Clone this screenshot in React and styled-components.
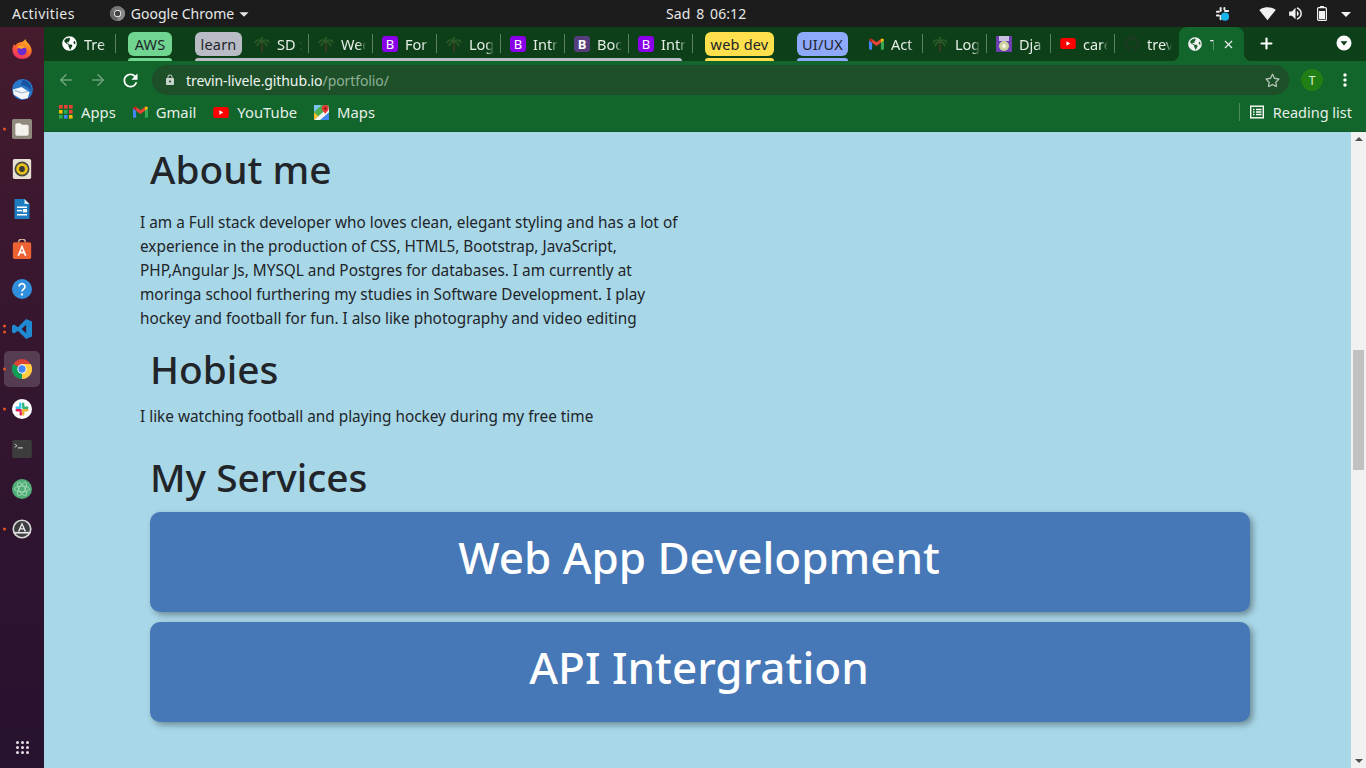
import React from 'react'
import styled, { createGlobalStyle } from 'styled-components'
import { FaGlobeAmericas, FaGithub, FaRegStar } from 'react-icons/fa'
import { FiArrowLeft, FiArrowRight, FiX, FiPlus } from 'react-icons/fi'
import { MdRefresh, MdLock, MdMoreVert, MdSignalWifi4Bar, MdVolumeUp, MdArrowDropDown } from 'react-icons/md'

const UI_FONT = `"Noto Sans", "Open Sans", sans-serif`

const Global = createGlobalStyle`
  html, body { margin: 0; padding: 0; height: 100%; overflow: hidden; }
  body { font-family: ${UI_FONT}; background: #1c1c1c; }
  * { box-sizing: border-box; }
`

const Screen = styled.div`
  width: 1366px;
  height: 768px;
  display: flex;
  flex-direction: column;
  overflow: hidden;
`

/* gnome top bar */
const TopBar = styled.div`
  height: 27px;
  flex: none;
  background: #1c1c1c;
  color: #e8e8e8;
  font-size: 14px;
  display: grid;
  grid-template-columns: 654px auto 1fr;
  align-items: center;
  padding: 0 8px 0 12px;
`
const BarLeft = styled.div`
  display: flex;
  align-items: center;
`
const Activities = styled.span`
  letter-spacing: 0.45px;
`
const AppMenu = styled.div`
  display: flex;
  align-items: center;
  margin-left: 35px;
  gap: 6px;
`
const MenuCaret = styled(MdArrowDropDown)`
  margin-left: -7px;
`
const BarRight = styled.div`
  display: flex;
  align-items: center;
  justify-content: flex-end;
  color: #f2f2f2;
`
const Tray = styled.span`
  display: flex;
  margin-left: ${p => p.$ml}px;
`
const Clock = styled.div`
  letter-spacing: 0.1px;
  word-spacing: 2px;
`

const Body = styled.div`
  flex: 1;
  display: flex;
  min-height: 0;
`

const Dock = styled.div`
  width: 44px;
  flex: none;
  background: linear-gradient(180deg, #451b2d 0%, #36162f 40%, #27122f 100%);
  display: flex;
  flex-direction: column;
  align-items: center;
  padding-top: 2px;
`
const DockItem = styled.div`
  width: 36px;
  height: 36px;
  margin: 2px 0;
  border-radius: 5px;
  background: ${p => (p.$active ? 'rgba(255,255,255,0.17)' : 'transparent')};
  display: flex;
  align-items: center;
  justify-content: center;
  position: relative;
`
const Pips = styled.div`
  position: absolute;
  left: -1px;
  top: 50%;
  transform: translateY(-50%);
  display: flex;
  flex-direction: column;
  gap: 3px;
`
const Pip = styled.span`
  width: 3px;
  height: 3px;
  border-radius: 50%;
  background: #e9541f;
`
const AppGrid = styled.div`
  margin-top: auto;
  margin-bottom: 14px;
  display: grid;
  grid-template-columns: repeat(3, 3px);
  gap: 2px;
`
const GridDot = styled.span`
  width: 3px;
  height: 3px;
  background: #e6e0e6;
  border-radius: 50%;
`

const Browser = styled.div`
  flex: 1;
  min-width: 0;
  display: flex;
  flex-direction: column;
`

const TabStrip = styled.div`
  height: 34px;
  flex: none;
  background: #0d4018;
  display: flex;
  align-items: stretch;
  padding-left: 8px;
  position: relative;
`
const Tab = styled.div`
  width: 64px;
  flex: none;
  display: flex;
  align-items: center;
  padding: 0 7px 1px 9px;
  gap: 7px;
  color: #e6eee8;
  font-size: 14.5px;
  white-space: nowrap;
  position: relative;
  &::after {
    content: '';
    display: ${p => (p.$noSep ? 'none' : 'block')};
    position: absolute;
    right: 0;
    top: 7px;
    height: 19px;
    width: 1px;
    background: #5d7f64;
  }
`
const TabLabel = styled.span`
  flex: 1;
  min-width: 0;
  overflow: hidden;
  -webkit-mask-image: linear-gradient(90deg, #000 70%, transparent 100%);
  mask-image: linear-gradient(90deg, #000 70%, transparent 100%);
`
const ActiveTab = styled.div`
  width: 65px;
  flex: none;
  background: #12652b;
  border-radius: 8px 8px 0 0;
  color: #f2f2f2;
  display: flex;
  align-items: center;
  padding: 0 9px;
  gap: 8px;
  font-size: 14px;
  position: relative;
  &::before, &::after {
    content: '';
    position: absolute;
    bottom: 0;
    width: 8px;
    height: 8px;
  }
  &::before {
    left: -8px;
    background: radial-gradient(circle at 0 0, transparent 8px, #12652b 8.5px);
  }
  &::after {
    right: -8px;
    background: radial-gradient(circle at 100% 0, transparent 8px, #12652b 8.5px);
  }
`
const GroupSlot = styled.div`
  width: ${p => p.$w}px;
  flex: none;
  padding-left: ${p => p.$left}px;
  padding-top: 5px;
  position: relative;
`
const Chip = styled.div`
  width: ${p => p.$w}px;
  height: 24px;
  border-radius: 6px;
  background: ${p => p.$bg};
  color: #20242a;
  font-size: 14.5px;
  letter-spacing: 0.2px;
  display: flex;
  align-items: center;
  justify-content: center;
  white-space: nowrap;
`
const GroupLine = styled.div`
  position: absolute;
  left: ${p => p.$left}px;
  width: ${p => p.$w}px;
  bottom: 0;
  height: 3px;
  border-radius: 3px 3px 0 0;
  background: ${p => p.$bg};
`
const StripIcon = styled.div`
  display: flex;
  color: #fff;
  position: absolute;
  top: 8px;
  left: ${p => p.$left}px;
`
const Favi = styled.span`
  width: 16px;
  height: 16px;
  flex: none;
  display: flex;
  align-items: center;
  justify-content: center;
  border-radius: 3px;
  background: ${p => p.$bg || 'transparent'};
  color: #fff;
  font-size: 13px;
  font-weight: ${p => (p.$bold ? 700 : 400)};
`

const Toolbar = styled.div`
  height: 38px;
  flex: none;
  background: #12652b;
  display: flex;
  align-items: center;
  padding: 0 11px 0 6px;
`
const NavBtn = styled.div`
  width: 32px;
  display: flex;
  justify-content: center;
  color: ${p => (p.$dim ? '#6fa27d' : '#fff')};
`
const Omnibox = styled.div`
  height: 30px;
  flex: 1;
  margin-left: 6px;
  background: #1d5029;
  border-radius: 15px;
  display: flex;
  align-items: center;
  padding: 0 9px 0 12px;
  font-size: 14px;
  color: #f0f4f1;
`
const Host = styled.span`
  margin-left: 10px;
  letter-spacing: -0.09px;
`
const UrlPath = styled.span`
  color: #8fb198;
`
const StarBtn = styled.span`
  margin-left: auto;
  display: flex;
  color: #b8c8bc;
`
const Avatar = styled.div`
  width: 22px;
  height: 22px;
  border-radius: 50%;
  background: #1f7f15;
  color: #d8f0d0;
  font-size: 12px;
  display: flex;
  align-items: center;
  justify-content: center;
  margin-left: 12px;
`
const MoreBtn = styled.div`
  display: flex;
  color: #fff;
  margin-left: 12px;
`

const BookmarkBar = styled.div`
  height: 33px;
  flex: none;
  background: #12652b;
  border-bottom: 1px solid #0f5a26;
  display: flex;
  align-items: center;
  padding: 0 14px 6px 15px;
  gap: 17px;
  color: #e6efe8;
  font-size: 14.8px;
`
const Bookmark = styled.div`
  display: flex;
  align-items: center;
  gap: 8px;
`
const ReadingList = styled.div`
  margin-left: auto;
  display: flex;
  align-items: center;
  gap: 9px;
  border-left: 1px solid #4c8a5e;
  padding-left: 10px;
  height: 18px;
  font-size: 14.5px;
`

const PageArea = styled.div`
  flex: 1;
  min-height: 0;
  display: flex;
`
const Page = styled.main`
  flex: 1;
  background: #a8d7e8;
  color: #212529;
  padding: 14px 0 0 96px;
  overflow: hidden;
`
const Heading = styled.h2`
  margin: ${p => p.$top || 0}px 0 0 10px;
  font-size: 38.8px;
  line-height: 46px;
  font-weight: 500;
`
const Para = styled.p`
  margin: ${p => p.$top}px 0 0;
  width: 550px;
  font-size: 15.35px;
  line-height: 24px;
`
const Card = styled.div`
  width: 1100px;
  height: 100px;
  margin: ${p => p.$top}px 0 0 10px;
  padding-bottom: 10px;
  padding-right: 2px;
  background: #4677b6;
  border-radius: 10px;
  box-shadow: 3px 3px 6px rgba(0, 0, 0, 0.35);
  color: #fff;
  font-size: 44px;
  font-weight: 500;
  display: flex;
  align-items: center;
  justify-content: center;
`
const ScrollBar = styled.div`
  width: 15px;
  flex: none;
  background: #f1f1f1;
  display: flex;
  flex-direction: column;
  align-items: center;
`
const Thumb = styled.div`
  width: 11px;
  height: 120px;
  margin-top: 209px;
  background: #c1c1c1;
`
const Arrow = styled.span`
  width: 0;
  height: 0;
  margin-top: ${p => (p.$down ? 'auto' : '5px')};
  margin-bottom: ${p => (p.$down ? '5px' : '0')};
  border-left: 4px solid transparent;
  border-right: 4px solid transparent;
  ${p => (p.$down ? 'border-top: 4px solid #505050;' : 'border-bottom: 4px solid #505050;')}
`

/* drawn icons */
const ChromeLogo = ({ size = 18, grey }) => (
  <svg width={size} height={size} viewBox="0 0 24 24">
    <circle cx="12" cy="12" r="12" fill={grey ? '#777' : '#db4437'} />
    <path d="M12 12 L1.6 6 A12 12 0 0 0 12 24 L18 14z" fill={grey ? '#666' : '#0f9d58'} />
    <path d="M12 12 L12 24 A12 12 0 0 0 22.4 6 L12 6z" fill={grey ? '#8a8a8a' : '#ffcd40'} />
    <circle cx="12" cy="12" r="5.6" fill="#fff" />
    <circle cx="12" cy="12" r="4.4" fill={grey ? '#444' : '#4285f4'} />
  </svg>
)
const Firefox = () => (
  <svg width="20" height="20" viewBox="0 0 24 24">
    <defs>
      <linearGradient id="ffx" x1="0.8" y1="0" x2="0.3" y2="1">
        <stop offset="0" stopColor="#ffc01f" />
        <stop offset="0.5" stopColor="#ff6a2a" />
        <stop offset="1" stopColor="#ee2a6b" />
      </linearGradient>
    </defs>
    <path d="M16 0c.5 3 3 4 5 7 2 3 3 6 2.500 9-1 5-6 8-11.500 8C5 24 .5 19 .5 13c0-3 1-5 2-7 .3 1 .8 1.600 1.500 2 1.500-2.500 3.500-3.500 6-4 2.500-.5 5-1.500 6-4z" fill="url(#ffx)" />
    <circle cx="12" cy="14" r="5.500" fill="#6b2bd0" />
    <path d="M6 10c3-3 8-3 11 1-2-.800-4-.5-5.500 1z" fill="#ffa726" />
  </svg>
)
const Thunderbird = () => (
  <svg width="21" height="21" viewBox="0 0 24 24">
    <circle cx="12" cy="12" r="12" fill="#2a76c9" />
    <path d="M12 1a11 11 0 0 1 10 13c-3-6-8-7-12-7z" fill="#1653a0" />
    <path d="M1 12l10-3 9 6-2 7-7 1-9-5z" fill="#f4f6fa" />
    <path d="M3 13l8 3 7-2" fill="none" stroke="#9db4d4" strokeWidth="1.300" />
  </svg>
)
const FilesIcon = () => (
  <svg width="20" height="20" viewBox="0 0 24 24">
    <rect width="24" height="24" rx="2" fill="#8f8a7d" />
    <path d="M4 7a2 2 0 0 1 2-2h4l2 2h6a2 2 0 0 1 2 2v9a2 2 0 0 1-2 2H6a2 2 0 0 1-2-2z" fill="#f5f2ee" />
  </svg>
)
const Rhythmbox = () => (
  <svg width="20" height="20" viewBox="0 0 24 24">
    <rect x="1" width="22" height="24" rx="2" fill="#e6e1d3" />
    <circle cx="12" cy="12" r="9" fill="#4a4a44" />
    <circle cx="12" cy="12" r="7" fill="#e8c317" />
    <circle cx="12" cy="12" r="3.500" fill="#3a3a36" />
  </svg>
)
const WriterIcon = () => (
  <svg width="20" height="20" viewBox="0 0 24 24">
    <path d="M3 1a1 1 0 0 1 1-1h11l6 6v17a1 1 0 0 1-1 1H4a1 1 0 0 1-1-1z" fill="#1d7cc0" />
    <path d="M15 0l6 6h-6z" fill="#d5e9f5" />
    <rect x="6" y="9" width="12" height="1.800" fill="#fff" />
    <rect x="6" y="13" width="6" height="1.800" fill="#fff" />
    <rect x="13" y="12" width="5" height="4" fill="#fff" />
    <rect x="6" y="18" width="12" height="1.800" fill="#fff" />
  </svg>
)
const SoftwareIcon = () => (
  <svg width="20" height="20" viewBox="0 0 24 24">
    <path d="M8 4a4 4 0 0 1 8 0" fill="none" stroke="#e8b9a0" strokeWidth="1.500" />
    <rect x="1" y="4" width="22" height="20" rx="2" fill="#ec6232" />
    <path d="M12 7l5.500 13h-2.300l-1-2.500H9.800l-1 2.500H6.500zM12 11l-1.400 4h2.800z" fill="#fff" />
  </svg>
)
const HelpIcon = () => (
  <svg width="20" height="20" viewBox="0 0 24 24">
    <circle cx="12" cy="12" r="12" fill="#2f8fdc" />
    <path d="M8.500 9a3.500 3.500 0 1 1 5.500 3c-1.300 1-2 1.500-2 3" fill="none" stroke="#fff" strokeWidth="2" />
    <circle cx="12" cy="18.500" r="1.400" fill="#fff" />
  </svg>
)
const VSCode = () => (
  <svg width="20" height="20" viewBox="0 0 24 24">
    <path d="M17 0l7 3v18l-7 3-10-10-4.500 3.500L0 16V8l2.500-1.500L7 10zM17 7l-5.500 5 5.500 5z" fill="#1f8ad2" />
  </svg>
)
const SlackIcon = () => (
  <svg width="20" height="20" viewBox="0 0 24 24">
    <circle cx="12" cy="12" r="12" fill="#fff" />
    <g strokeWidth="2.800" strokeLinecap="round" fill="none">
      <path d="M10 5.500v5M5.500 10.500h3" stroke="#36c5f0" />
      <path d="M18.500 10.500h-5M13.500 5.500v3" stroke="#2eb67d" />
      <path d="M13.500 18.500v-5M18.500 13.500h-3" stroke="#ecb22e" />
      <path d="M5.500 13.500h5M10.500 18.500v-3" stroke="#e01e5a" />
    </g>
  </svg>
)
const SlackTray = () => (
  <svg width="15" height="15" viewBox="0 0 24 24">
    <g strokeWidth="3.200" strokeLinecap="round" fill="none" stroke="#eee">
      <path d="M9 3v5M3 9h3" />
      <path d="M21 8h-5M15 3v2" />
      <path d="M9 21v-5M3 15h3" />
    </g>
    <circle cx="16" cy="17" r="6.500" fill="#18b4ea" />
  </svg>
)
const BatteryIcon = () => (
  <svg width="10" height="15" viewBox="0 0 10 15">
    <rect x="3" width="4" height="2" fill="#f2f2f2" />
    <rect x=".6" y="1.600" width="8.800" height="12.800" rx="1" fill="none" stroke="#f2f2f2" strokeWidth="1.200" />
    <rect x="2" y="5" width="6" height="8" fill="#f2f2f2" />
  </svg>
)
const TerminalIcon = () => (
  <svg width="20" height="18" viewBox="0 0 24 22">
    <rect width="24" height="22" rx="2" fill="#3c3c3c" />
    <path d="M3 5l3 2-3 2" fill="none" stroke="#ddd" strokeWidth="1" />
    <rect x="7" y="9" width="6" height="1.300" fill="#ddd" />
  </svg>
)
const AtomIcon = () => (
  <svg width="20" height="20" viewBox="0 0 24 24">
    <circle cx="12" cy="12" r="12" fill="#52ae78" />
    <g fill="none" stroke="#a9dcb9" strokeWidth="1">
      <ellipse cx="12" cy="12" rx="9" ry="3.500" />
      <ellipse cx="12" cy="12" rx="9" ry="3.500" transform="rotate(60 12 12)" />
      <ellipse cx="12" cy="12" rx="9" ry="3.500" transform="rotate(120 12 12)" />
    </g>
  </svg>
)
const UpdaterIcon = () => (
  <svg width="20" height="20" viewBox="0 0 24 24">
    <circle cx="12" cy="12" r="10.500" fill="#3e3e42" stroke="#d8d8d8" strokeWidth="2" />
    <path d="M12 4l5 11h-2l-1-2.500h-4L9 15H7zM12 7.500l-1.300 3.500h2.600z" fill="#e8e8e8" />
    <rect x="3" y="15.500" width="18" height="2" fill="#e8e8e8" />
  </svg>
)
const GmailIcon = () => (
  <svg width="15" height="12" viewBox="0 0 24 18">
    <path d="M0 3v13a2 2 0 0 0 2 2h3V7z" fill="#4285f4" />
    <path d="M24 3v13a2 2 0 0 1-2 2h-3V7z" fill="#34a853" />
    <path d="M5 7V1l7 5 7-5v6l-7 5z" fill="#ea4335" />
    <path d="M0 3a3 3 0 0 1 5-2v6L0 3z" fill="#c5221f" />
    <path d="M24 3a3 3 0 0 0-5-2v6l5-4z" fill="#fbbc04" />
  </svg>
)
const YoutubeIcon = () => (
  <svg width="16" height="11" viewBox="0 0 24 17">
    <rect width="24" height="17" rx="4" fill="#f00" />
    <path d="M9.500 5v7l6-3.500z" fill="#fff" />
  </svg>
)
const MapsIcon = () => (
  <svg width="15" height="15" viewBox="0 0 24 24">
    <rect width="24" height="24" rx="2" fill="#4caf50" />
    <path d="M0 24L24 3v9L10 24z" fill="#f7f7f7" />
    <path d="M0 24V12l7 6z" fill="#fbc02d" />
    <path d="M10 24l14-12v12z" fill="#4285f4" />
    <path d="M0 0h12L0 11z" fill="#7cc4f5" />
    <path d="M18 0a5.500 5.500 0 0 1 5.500 5.500C23.500 9 20 11 18 14c-2-3-5.500-5-5.500-8.500A5.500 5.500 0 0 1 18 0z" fill="#e53935" />
    <circle cx="18" cy="5.500" r="2" fill="#8e1c18" />
  </svg>
)
const AppsGrid = () => (
  <svg width="14" height="14" viewBox="0 0 14 14">
    {[0, 5, 10].map((y, r) =>
      [0, 5, 10].map((x, c) => (
        <rect
          key={`${r}${c}`}
          x={x}
          y={y}
          width="3.600"
          height="3.600"
          fill={[['#ea4335', '#ea4335', '#ea4335'], ['#fbbc04', '#34a853', '#ea4335'], ['#34a853', '#4285f4', '#fbbc04']][r][c]}
        />
      ))
    )}
  </svg>
)
const PalmFavicon = () => (
  <svg width="16" height="16" viewBox="0 0 24 24">
    <path d="M11 10h2l1 13h-4z" fill="#3d3a20" />
    <g fill="none" stroke="#2f5a2a" strokeWidth="2.600" strokeLinecap="round">
      <path d="M12 9C9 5 5 5 2 9" />
      <path d="M12 9c3-4 7-4 10 0" />
      <path d="M12 9c-1-3-1-5 0-7" />
      <path d="M11 9c-3 0-5 2-6 5" />
      <path d="M13 9c3 0 5 2 6 5" />
    </g>
  </svg>
)
const DjangoFavicon = () => (
  <svg width="16" height="16" viewBox="0 0 16 16">
    <rect width="16" height="16" fill="#6d3fb0" />
    <rect x="3" width="10" height="5" fill="#c9bfe0" />
    <circle cx="8" cy="10" r="5" fill="#cdd4a0" />
    <circle cx="8" cy="10" r="2" fill="#f4f4e0" />
  </svg>
)
const ReadingIcon = () => (
  <svg width="14" height="14" viewBox="0 0 14 14" fill="none" stroke="#fff" strokeWidth="1.400">
    <rect x=".7" y="1.200" width="12.600" height="11.600" />
    <path d="M3 4.500h1.500M6 4.500h5.500M3 7h1.500M6 7h5.500M3 9.500h1.500M6 9.500h5.500" />
  </svg>
)
const TabSearch = () => (
  <svg width="16" height="16" viewBox="0 0 16 16">
    <circle cx="8" cy="8" r="7.500" fill="#fff" />
    <path d="M4.500 6.200h7L8 10.500z" fill="#0d4018" />
  </svg>
)

const dockApps = [
  { icon: <Firefox /> },
  { icon: <Thunderbird /> },
  { icon: <FilesIcon />, pips: 1 },
  { icon: <Rhythmbox /> },
  { icon: <WriterIcon /> },
  { icon: <SoftwareIcon /> },
  { icon: <HelpIcon /> },
  { icon: <VSCode />, pips: 2 },
  { icon: <ChromeLogo size={20} />, pips: 1, active: true },
  { icon: <SlackIcon />, pips: 1 },
  { icon: <TerminalIcon /> },
  { icon: <AtomIcon /> },
  { icon: <UpdaterIcon />, pips: 1 },
]

const Boot = ({ bold }) => <Favi $bg={bold ? '#563d7c' : '#8a00ea'} $bold={bold}>B</Favi>

const App = () => (
  <Screen>
    <Global />
    <TopBar>
      <BarLeft>
        <Activities>Activities</Activities>
        <AppMenu>
          <ChromeLogo size={15} grey />
          Google Chrome
          <MenuCaret size={22} />
        </AppMenu>
      </BarLeft>
      <Clock>Sad 8 06:12</Clock>
      <BarRight>
        <Tray $ml={0}><SlackTray /></Tray>
        <Tray $ml={29}><MdSignalWifi4Bar size={17} /></Tray>
        <Tray $ml={11}><MdVolumeUp size={17} /></Tray>
        <Tray $ml={13}><BatteryIcon /></Tray>
        <Tray $ml={7}><MdArrowDropDown size={24} /></Tray>
      </BarRight>
    </TopBar>
    <Body>
      <Dock>
        {dockApps.map((app, i) => (
          <DockItem key={i} $active={app.active}>
            {app.pips && (
              <Pips>
                {Array.from({ length: app.pips }).map((_, k) => <Pip key={k} />)}
              </Pips>
            )}
            {app.icon}
          </DockItem>
        ))}
        <AppGrid>
          {Array.from({ length: 9 }).map((_, i) => <GridDot key={i} />)}
        </AppGrid>
      </Dock>
      <Browser>
        <TabStrip>
          <Tab><Favi><FaGlobeAmericas size={15} /></Favi><TabLabel>Tre</TabLabel></Tab>
          <GroupSlot $w={79} $left={12}>
            <Chip $w={44} $bg="#6fd590">AWS</Chip>
            <GroupLine $left={12} $w={44} $bg="#6fd590" />
          </GroupSlot>
          <GroupSlot $w={50} $left={0}>
            <Chip $w={47} $bg="#b9bcc5">learn</Chip>
            <GroupLine $left={0} $w={487} $bg="#b9bcc5" />
          </GroupSlot>
          <Tab><PalmFavicon /><TabLabel>SD :</TabLabel></Tab>
          <Tab><PalmFavicon /><TabLabel>Wee</TabLabel></Tab>
          <Tab><Boot /><TabLabel>For</TabLabel></Tab>
          <Tab><PalmFavicon /><TabLabel>Log</TabLabel></Tab>
          <Tab><Boot /><TabLabel>Intr</TabLabel></Tab>
          <Tab><Boot bold /><TabLabel>Boo</TabLabel></Tab>
          <Tab><Boot /><TabLabel>Intr</TabLabel></Tab>
          <GroupSlot $w={104} $left={12}>
            <Chip $w={69} $bg="#fde04c">web dev</Chip>
            <GroupLine $left={12} $w={69} $bg="#fde04c" />
          </GroupSlot>
          <GroupSlot $w={62} $left={0}>
            <Chip $w={51} $bg="#8ea8fa">UI/UX</Chip>
            <GroupLine $left={0} $w={51} $bg="#8ea8fa" />
          </GroupSlot>
          <Tab><Favi><GmailIcon /></Favi><TabLabel>Act</TabLabel></Tab>
          <Tab><PalmFavicon /><TabLabel>Log</TabLabel></Tab>
          <Tab><DjangoFavicon /><TabLabel>Dja</TabLabel></Tab>
          <Tab><Favi><YoutubeIcon /></Favi><TabLabel>care</TabLabel></Tab>
          <Tab $noSep><Favi><FaGithub size={16} color="#1c3a24" /></Favi><TabLabel>trev</TabLabel></Tab>
          <ActiveTab>
            <FaGlobeAmericas size={14} style={{ flex: 'none' }} />
            <TabLabel>T</TabLabel>
            <FiX size={13} style={{ flex: 'none' }} />
          </ActiveTab>
          <StripIcon $left={1214}><FiPlus size={17} strokeWidth={3} /></StripIcon>
          <StripIcon $left={1292}><TabSearch /></StripIcon>
        </TabStrip>
        <Toolbar>
          <NavBtn $dim><FiArrowLeft size={18} /></NavBtn>
          <NavBtn $dim><FiArrowRight size={18} /></NavBtn>
          <NavBtn><MdRefresh size={21} /></NavBtn>
          <Omnibox>
            <MdLock size={12} color="#c8d4cb" />
            <Host>trevin-livele.github.io<UrlPath>/portfolio/</UrlPath></Host>
            <StarBtn><FaRegStar size={15} /></StarBtn>
          </Omnibox>
          <Avatar>T</Avatar>
          <MoreBtn><MdMoreVert size={20} /></MoreBtn>
        </Toolbar>
        <BookmarkBar>
          <Bookmark><AppsGrid />Apps</Bookmark>
          <Bookmark><GmailIcon />Gmail</Bookmark>
          <Bookmark><YoutubeIcon />YouTube</Bookmark>
          <Bookmark><MapsIcon />Maps</Bookmark>
          <ReadingList><ReadingIcon />Reading list</ReadingList>
        </BookmarkBar>
        <PageArea>
          <Page>
            <Heading>About me</Heading>
            <Para $top={18}>
              I am a Full stack developer who loves clean, elegant styling and has a lot of experience in the
              production of CSS, HTML5, Bootstrap, JavaScript, PHP,Angular Js, MYSQL and Postgres for databases.
              I am currently at moringa school furthering my studies in Software Development. I play hockey and
              football for fun. I also like photography and video editing
            </Para>
            <Heading $top={16}>Hobies</Heading>
            <Para $top={12}>I like watching football and playing hockey during my free time</Para>
            <Heading $top={26}>My Services</Heading>
            <Card $top={12}>Web App Development</Card>
            <Card $top={10}>API Intergration</Card>
          </Page>
          <ScrollBar>
            <Arrow />
            <Thumb />
            <Arrow $down />
          </ScrollBar>
        </PageArea>
      </Browser>
    </Body>
  </Screen>
)

export default App
